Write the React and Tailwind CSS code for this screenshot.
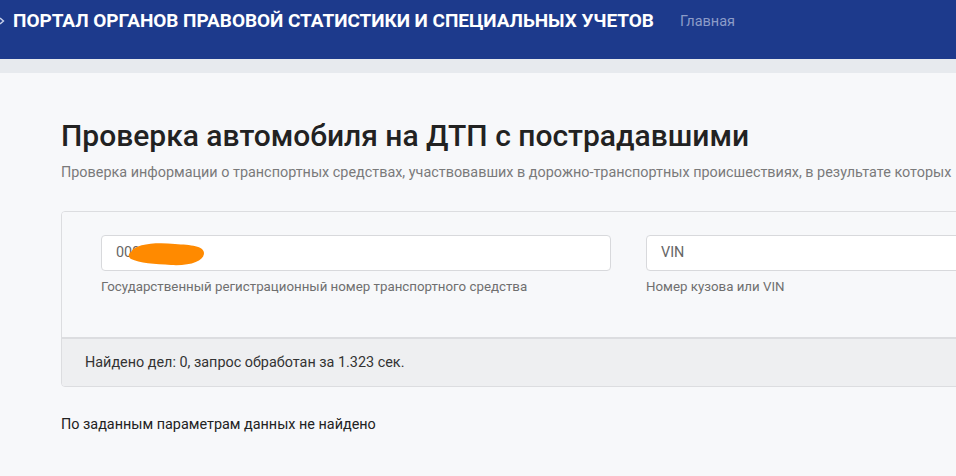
import React from 'react';

const App = () => {
  return (
    <div className="w-[956px] h-[476px] overflow-hidden bg-[#f7f8fa] font-['Roboto','Liberation_Sans',sans-serif]">
      <header className="h-[59px] bg-[#1d3a8c] flex items-start pt-[10px] whitespace-nowrap">
        <svg className="mt-[7px] mr-[8px] shrink-0" width="5" height="8" viewBox="0 0 5 8">
          <path d="M0 1 L3.5 4 L0 7" stroke="#c9d1ea" strokeWidth="1.4" fill="none" />
        </svg>
        <span className="text-white font-bold text-[19px] leading-[22px] tracking-[-0.05px]">
          ПОРТАЛ ОРГАНОВ ПРАВОВОЙ СТАТИСТИКИ И СПЕЦИАЛЬНЫХ УЧЕТОВ
        </span>
        <span className="ml-[26px] text-[#8c9cc8] text-[14.5px] leading-[24px]">Главная</span>
      </header>
      <div className="h-[14px] bg-[#e7eaee]"></div>

      <main className="pl-[61px] pt-[44px] w-[1200px]">
        <h1 className="text-[30px] leading-[38px] font-medium text-[#222]">
          Проверка автомобиля на ДТП с пострадавшими
        </h1>
        <p className="mt-[9px] text-[14.4px] leading-[18px] text-[#7a7a7a] whitespace-nowrap">
          Проверка информации о транспортных средствах, участвовавших в дорожно-транспортных происшествиях, в результате которых
        </p>

        <div className="mt-[29px] border border-[#dcdde0] rounded-[4px] overflow-hidden">
          <div className="flex gap-[35px] px-[39px] pt-[23px] pb-[41px] bg-[#f7f8fa]">
            <div className="w-[510px] shrink-0">
              <div className="relative h-[36px] bg-white border border-[#d8d9dc] rounded-[4px] flex items-center px-[14px]">
                <span className="text-[14.4px] text-[#666]">009</span>
                <svg className="absolute left-[25px] top-[4px]" width="80" height="28" viewBox="0 0 80 28">
                  <path d="M4 12 C8 4 28 2 48 4 C64 5 77 6 77 13 C77 21 64 26 44 25 C28 24 12 23 4 19 C1 17 1 14 4 12 Z" fill="#ff8a00" />
                </svg>
              </div>
              <div className="mt-[7px] text-[13.3px] leading-[18px] text-[#6f6f6f] whitespace-nowrap">
                Государственный регистрационный номер транспортного средства
              </div>
            </div>
            <div className="w-[510px] shrink-0">
              <div className="h-[36px] bg-white border border-[#d8d9dc] rounded-[4px] flex items-center px-[14px]">
                <span className="text-[14.4px] text-[#666]">VIN</span>
              </div>
              <div className="mt-[7px] text-[13.3px] leading-[18px] text-[#6f6f6f]">Номер кузова или VIN</div>
            </div>
          </div>
          <div className="h-[49px] bg-[#eeeff1] border-t-[2px] border-[#dcdde0] flex items-center px-[23px]">
            <span className="text-[14.4px] text-[#333]">Найдено дел: 0, запрос обработан за 1.323 сек.</span>
          </div>
        </div>

        <p className="mt-[29px] text-[14.4px] leading-[18px] text-[#222]">По заданным параметрам данных не найдено</p>
      </main>
    </div>
  );
};

export default App;
